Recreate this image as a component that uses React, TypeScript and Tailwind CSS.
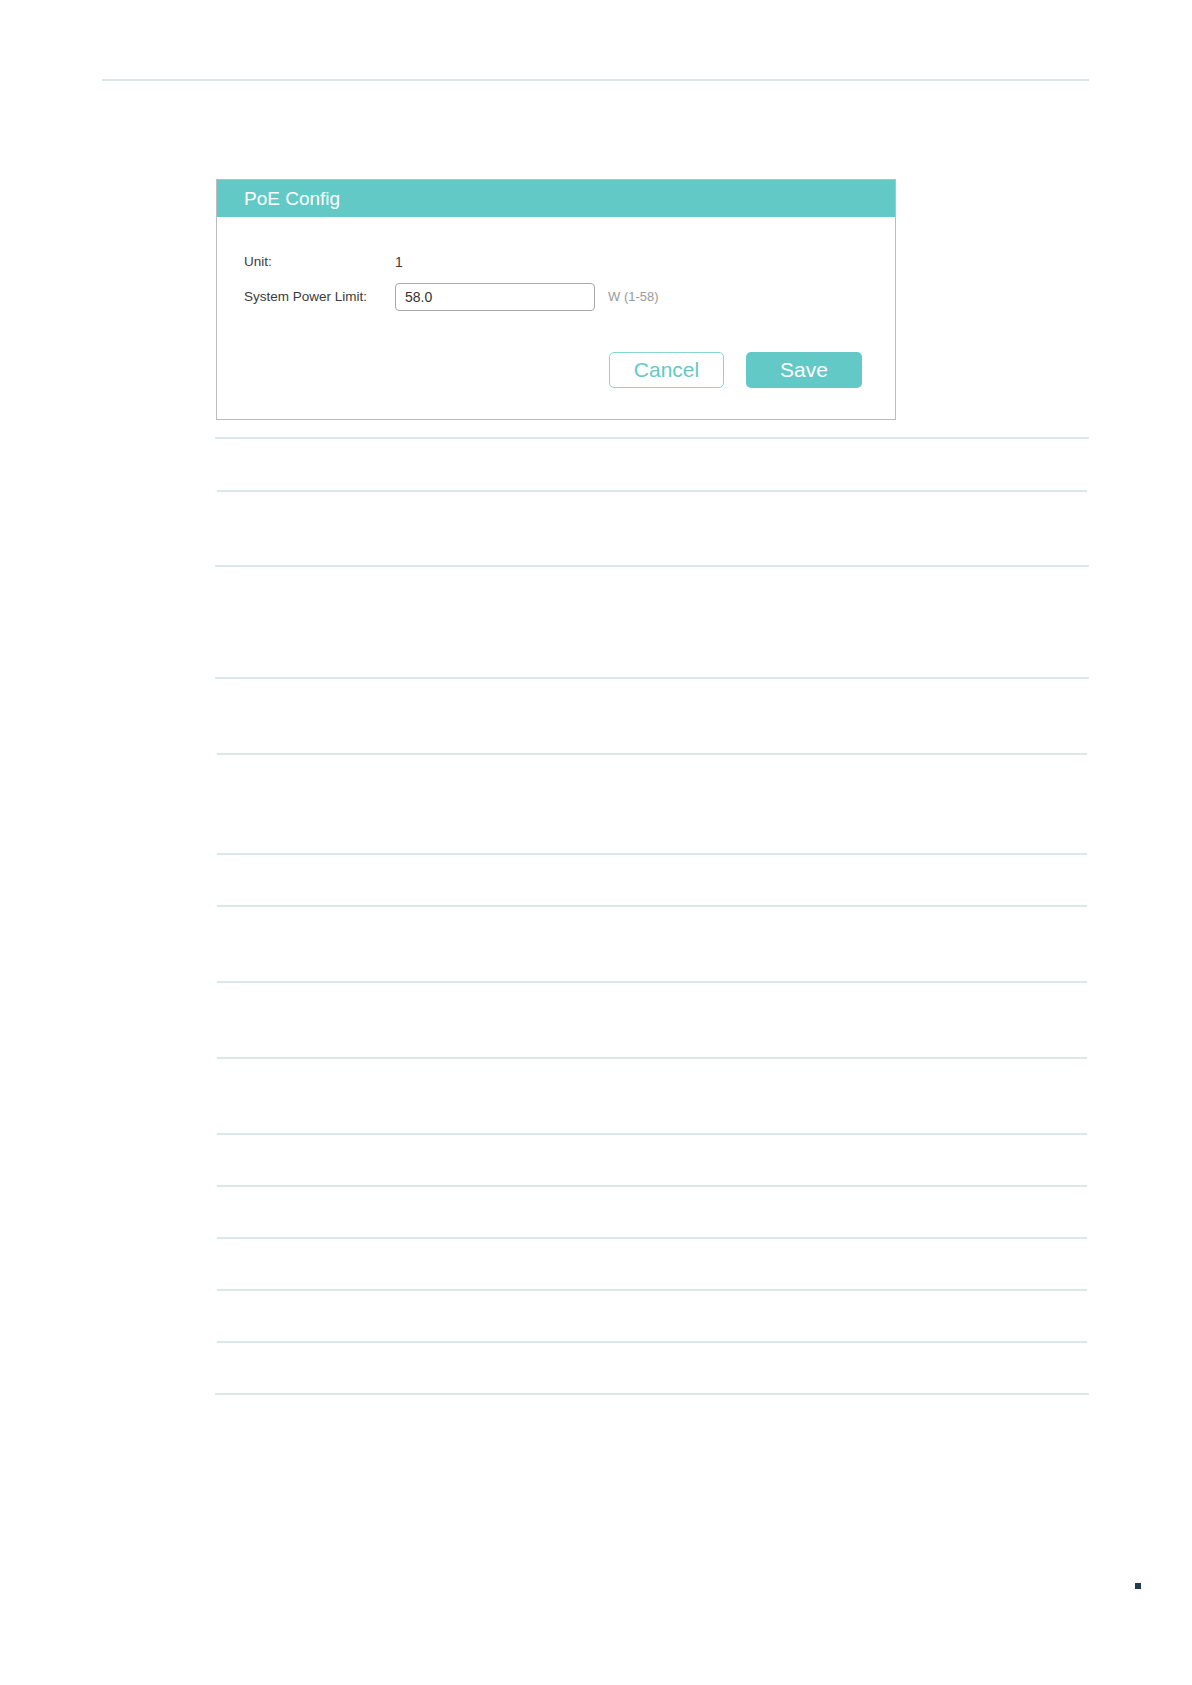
const rows = [
  { h: 'h-[53px]', line: 'ml-[215px] w-[874px]' },
  { h: 'h-[75px]', line: 'ml-[217px] w-[870px]' },
  { h: 'h-[112px]', line: 'ml-[215px] w-[874px]' },
  { h: 'h-[76px]', line: 'ml-[215px] w-[874px]' },
  { h: 'h-[100px]', line: 'ml-[217px] w-[870px]' },
  { h: 'h-[52px]', line: 'ml-[217px] w-[870px]' },
  { h: 'h-[76px]', line: 'ml-[217px] w-[870px]' },
  { h: 'h-[76px]', line: 'ml-[217px] w-[870px]' },
  { h: 'h-[76px]', line: 'ml-[217px] w-[870px]' },
  { h: 'h-[52px]', line: 'ml-[217px] w-[870px]' },
  { h: 'h-[52px]', line: 'ml-[217px] w-[870px]' },
  { h: 'h-[52px]', line: 'ml-[217px] w-[870px]' },
  { h: 'h-[52px]', line: 'ml-[217px] w-[870px]' },
  { h: 'h-[52px]', line: 'ml-[217px] w-[870px]' },
  { h: 'h-[2px]', line: 'ml-[215px] w-[874px]' },
]

function PoeDialog() {
  return (
    <div className="ml-[216px] mt-[98px] w-[680px] h-[241px] border border-[#bdbdbd] flex flex-col">
      {/* Header */}
      <div className="h-[37px] bg-[#62c9c6] pl-[27px] flex items-center">
        <span className="text-[19px] text-white leading-none">PoE Config</span>
      </div>

      <div className="pl-[27px] pr-[33px] pt-[35px] text-[13.5px] text-[#3c3c3c]">
        <div className="flex items-center h-[20px]">
          <span className="w-[151px]">Unit:</span>
          <span className="text-[14px]">1</span>
        </div>
        <div className="flex items-center h-[28px] mt-[11px]">
          <span className="w-[151px]">System Power Limit:</span>
          <div className="w-[200px] h-[28px] border border-[#a8a8a8] rounded-[4px] flex items-center pl-[9px] text-[14px] text-[#333]">
            58.0
          </div>
          <span className="ml-[13px] text-[13px] text-[#9a9a9a]">W (1-58)</span>
        </div>

        <div className="flex justify-end gap-[22px] mt-[41px]">
          <button className="w-[115px] h-[36px] rounded-[5px] border border-[#86d6d3] text-[#62c9c6] text-[21px] flex items-center justify-center">
            Cancel
          </button>
          <button className="w-[116px] h-[36px] rounded-[5px] bg-[#62c9c6] text-white text-[21px] flex items-center justify-center">
            Save
          </button>
        </div>
      </div>
    </div>
  )
}

export default function App() {
  return (
    <div className="w-[1192px] min-h-[1685px] bg-white font-['Liberation_Sans',Arial,sans-serif] pt-[79px]">
      <div className="ml-[102px] w-[987px] h-[2px] bg-[#dbe6e9]" />

      <PoeDialog />

      {/* Table rows (content blank) */}
      <div className="mt-[17px]">
        {rows.map((row, i) => (
          <div key={i} className={row.h}>
            <div className={`${row.line} h-[2px] bg-[#dbe6e9]`} />
          </div>
        ))}
      </div>

      <div className="ml-[1135px] mt-[188px] w-[6px] h-[6px] bg-[#1e3d4d]" />
    </div>
  )
}
